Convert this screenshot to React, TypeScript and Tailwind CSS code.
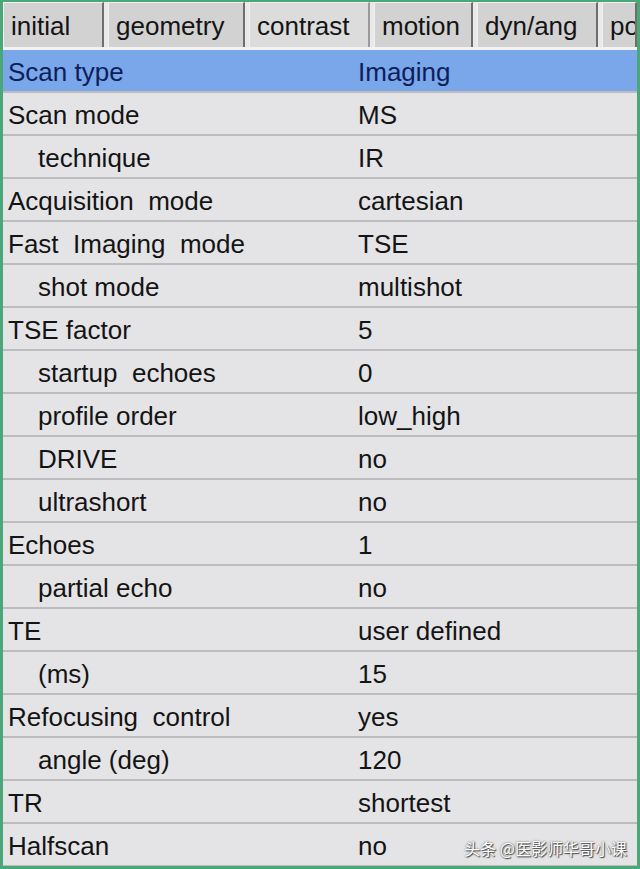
const tabs = [
  { label: "initial", w: "w-[101px]" },
  { label: "geometry", w: "w-[137px]" },
  { label: "contrast", w: "w-[121px]", active: true },
  { label: "motion", w: "w-[99px]" },
  { label: "dyn/ang", w: "w-[121px]" },
  { label: "po", w: "flex-1" },
];

const rows: { label: string; value: string; sub?: boolean }[] = [
  { label: "Scan type", value: "Imaging" },
  { label: "Scan mode", value: "MS" },
  { label: "technique", value: "IR", sub: true },
  { label: "Acquisition  mode", value: "cartesian" },
  { label: "Fast  Imaging  mode", value: "TSE" },
  { label: "shot mode", value: "multishot", sub: true },
  { label: "TSE factor", value: "5" },
  { label: "startup  echoes", value: "0", sub: true },
  { label: "profile order", value: "low_high", sub: true },
  { label: "DRIVE", value: "no", sub: true },
  { label: "ultrashort", value: "no", sub: true },
  { label: "Echoes", value: "1" },
  { label: "partial echo", value: "no", sub: true },
  { label: "TE", value: "user defined" },
  { label: "(ms)", value: "15", sub: true },
  { label: "Refocusing  control", value: "yes" },
  { label: "angle (deg)", value: "120", sub: true },
  { label: "TR", value: "shortest" },
  { label: "Halfscan", value: "no" },
];

export default function App() {
  return (
    <div
      className="w-[640px] h-[869px] overflow-hidden border-[#4aa878] border-t-2 border-x-[3px] border-b-[3px] bg-[#e4e4e6] text-[#141414] flex flex-col"
      style={{ fontFamily: '"Liberation Sans", Arial, sans-serif' }}
    >
      <div className="flex shrink-0 gap-[4px] h-[48px] bg-[#e9e9e9] border-b-[3px] border-[#f2f2f2] overflow-hidden">
        {tabs.map((t) => (
          <div
            key={t.label}
            className={`${t.w} shrink-0 h-full flex items-center pl-[7px] pt-[2px] text-[26px] whitespace-nowrap overflow-hidden border-l border-t border-[#f0f0f0] border-r-2 border-r-[#6e6e6e] ${
              t.active ? "bg-[#dcdcdc] border-r-[#9a9a9a]" : "bg-[#d2d2d2]"
            }`}
          >
            {t.label}
          </div>
        ))}
      </div>
      <div className="flex-1 flex flex-col">
        {rows.map((r, i) => (
          <div
            key={r.label}
            className={`h-[43px] shrink-0 flex items-center pt-[3px] text-[26px] whitespace-pre border-b-2 border-[#bdbdc0] ${
              i === 0 ? "bg-[#7aa6ea] text-[#0c1f5a]" : ""
            }`}
          >
            <div className={`w-[355px] ${r.sub ? "pl-[35px]" : "pl-[5px]"}`}>{r.label}</div>
            <div className="flex-1 flex items-center justify-between pr-[10px]">
              <span>{r.value}</span>
              {i === rows.length - 1 && (
                <span
                  className="text-[16px] text-white mt-[4px]"
                  style={{ fontFamily: '"Noto Sans CJK SC", sans-serif', textShadow: "0 0 2px #555, 1px 1px 1px #444" }}
                >
                  头条 @医影师华哥小课
                </span>
              )}
            </div>
          </div>
        ))}
      </div>
    </div>
  );
}
